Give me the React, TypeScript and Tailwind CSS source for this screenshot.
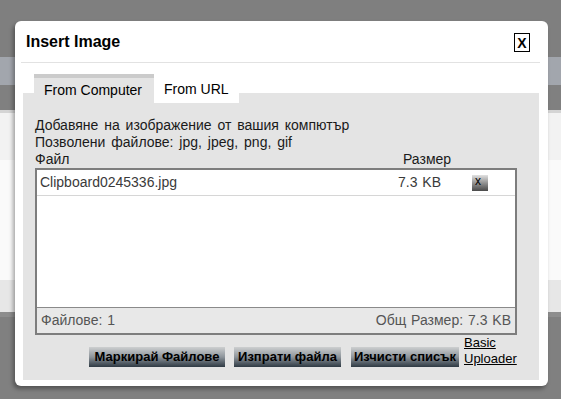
export default function App() {
  return (
    <div className="relative w-[561px] h-[399px] overflow-hidden flex flex-col font-['Liberation_Sans',Arial,sans-serif]">
      {/* page behind the overlay */}
      <div className="h-[57px] bg-[#7f7f7f]" />
      <div className="h-[28px] bg-[#a2a6ad]" />
      <div className="h-[25px] bg-[#808080]" />
      <div className="h-[3px] bg-[#d4d4d4]" />
      <div className="h-[47px] bg-[#f2f2f2]" />
      <div className="h-[120px] bg-[#fafafa]" />
      <div className="h-[32px] bg-[#e7e7e7]" />
      <div className="h-[5px] bg-[#8d8d8d]" />
      <div className="flex-1 bg-[#808080]" />

      {/* dialog */}
      <div className="absolute left-[15px] top-[21px] w-[533px] h-[365px] bg-white rounded-[6px] shadow-[-2px_3px_4px_rgba(0,0,0,0.35)] flex flex-col">
        <div className="h-[41px] flex items-center justify-between pl-[11px] pr-[18px]">
          <span className="text-[16px] font-bold text-black">Insert Image</span>
          <button className="w-[16px] h-[19px] mt-[2px] border border-black flex items-center justify-center text-[14px] font-bold leading-none text-black">
            X
          </button>
        </div>
        <div className="h-px bg-[#e2e2e2] ml-[6px] mr-[8px]" />

        {/* tabs */}
        <div className="relative z-10 flex items-start pt-[11px] pl-[19px] text-[14px] text-black">
          <div className="w-[120px] h-[28px] border-t-[4px] border-[#cbcbcb] bg-[#e4e4e4] pl-[10px] pt-[4px] leading-[16px]">
            From Computer
          </div>
          <div className="w-[85px] h-[26px] mt-[3px] bg-white pl-[10px] pt-[4px] leading-[16px]">
            From URL
          </div>
        </div>

        {/* panel */}
        <div className="flex-1 -mt-[10px] ml-[8px] mr-[9px] mb-[6px] bg-[#e4e4e4] pl-[12px] pr-[22px] pt-[24px] pb-[13px] flex flex-col">
          <div className="text-[14px] leading-[17px] text-[#1a1a1a] [word-spacing:2px]">
            <div>Добавяне на изображение от вашия компютър</div>
            <div>Позволени файлове: jpg, jpeg, png, gif</div>
            <div className="flex">
              <span className="flex-1">Файл</span>
              <span className="w-[114px]">Размер</span>
            </div>
          </div>

          {/* file list */}
          <div className="h-[167px] border-2 border-[#7d7d7d] bg-white flex flex-col text-[14px] [word-spacing:1px]">
            <div className="h-[26px] border-b border-[#d6d6d6] flex items-center text-[#3a3a3a]">
              <span className="flex-1 pl-[3px]">Clipboard0245336.jpg</span>
              <span className="w-[74px]">7.3 KB</span>
              <button className="w-[16px] h-[16px] bg-linear-to-b from-[#e2e2e2] to-[#4a4a4a] text-[12px] leading-[12px] text-black text-left pl-[3px] pb-[4px] mr-[27px]">
                x
              </button>
            </div>
            <div className="flex-1" />
            <div className="h-[26px] border-t border-[#8a8a8a] bg-[#e8e8e8] flex items-center justify-between px-[4px] text-[#555]">
              <span>Файлове: 1</span>
              <span>Общ Размер: 7.3 KB</span>
            </div>
          </div>

          {/* actions */}
          <div className="flex justify-end items-end pr-[2px]">
            <button className="w-[136px] h-[20px] mr-[9px] bg-linear-to-b from-[#cdcfd0] via-[#8e959b] to-[#2f3a44] text-[13px] font-bold text-black leading-[20px]">
              Маркирай Файлове
            </button>
            <button className="w-[107px] h-[20px] mr-[10px] bg-linear-to-b from-[#cdcfd0] via-[#8e959b] to-[#2f3a44] text-[13px] font-bold text-black leading-[20px]">
              Изпрати файла
            </button>
            <button className="w-[108px] h-[20px] mr-[5px] bg-linear-to-b from-[#cdcfd0] via-[#8e959b] to-[#2f3a44] text-[13px] font-bold text-black leading-[20px]">
              Изчисти списък
            </button>
            <a className="text-[13px] leading-[16px] underline text-black w-[51px]">
              Basic Uploader
            </a>
          </div>
        </div>
      </div>
    </div>
  );
}
